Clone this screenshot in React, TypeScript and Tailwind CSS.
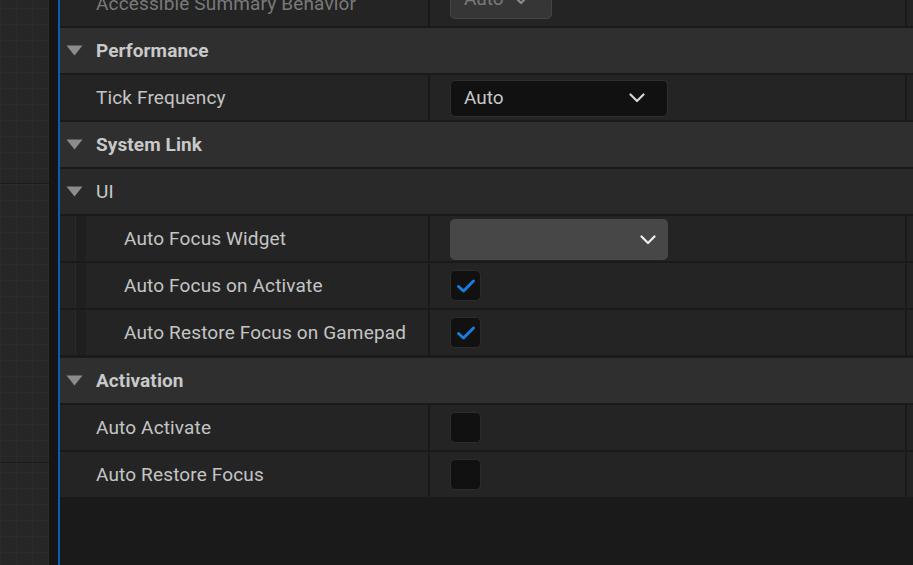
import { ReactNode } from "react";

const Triangle = () => (
  <svg width="17" height="11" viewBox="0 0 17 11" className="shrink-0">
    <path d="M0.5 0.5 H16.5 L8.5 10.5 Z" fill="#8c8c8c" />
  </svg>
);

const Chevron = ({ color = "#d6d6d6" }: { color?: string }) => (
  <svg width="16" height="10" viewBox="0 0 16 10">
    <path d="M1.5 1.5 L8 8 L14.5 1.5" fill="none" stroke={color} strokeWidth="2.2" strokeLinecap="round" strokeLinejoin="round" />
  </svg>
);

const Checkbox = ({ checked }: { checked?: boolean }) => (
  <div className="flex h-[31px] w-[31px] items-center justify-center rounded-[5px] border border-[#2c2c2c] bg-[#111111]">
    {checked && (
      <svg width="20" height="16" viewBox="0 0 20 16">
        <path d="M2.5 8.5 L7.5 13 L17.5 3" fill="none" stroke="#1a7ce0" strokeWidth="3" strokeLinecap="round" strokeLinejoin="round" />
      </svg>
    )}
  </div>
);

function Category({ title, bold = true, className = "" }: { title: string; bold?: boolean; className?: string }) {
  return (
    <div className={`flex h-[45px] shrink-0 items-center ${bold ? "bg-[#2f2f2f]" : "bg-[#292929]"} ${className}`}>
      <div className="pl-[6px] pr-[13px]">
        <Triangle />
      </div>
      <span className={`pt-[1px] text-[19px] tracking-[0.1px] text-[#c9c9c9] ${bold ? "font-bold" : ""}`}>{title}</span>
    </div>
  );
}

function Row({ label, indent, children, dim }: { label: string; indent?: boolean; children?: ReactNode; dim?: boolean }) {
  return (
    <div className="flex h-[45px] shrink-0 bg-[#242424]">
      {indent && (
        <div className="flex h-full w-[26px] shrink-0">
          <div className="w-[15px] bg-[#232323]" />
          <div className="w-[1px] bg-[#2a2a2a]" />
          <div className="w-[10px] bg-[#1f1f1f]" />
        </div>
      )}
      <div className={`flex items-center ${indent ? "w-[342px] pl-[38px]" : "w-[368px] pl-[36px]"}`}>
        <span className={`whitespace-nowrap pt-[2px] text-[19px] tracking-[0.15px] ${dim ? "text-[#7a7a7a]" : "text-[#c4c4c4]"}`}>{label}</span>
      </div>
      <div className="w-[2px] bg-[#1a1a1a]" />
      <div className="flex w-[475px] items-center pl-[20px]">{children}</div>
      <div className="w-[2px] bg-[#1a1a1a]" />
      <div className="flex-1" />
    </div>
  );
}

export default function App() {
  return (
    <div className="flex h-[565px] w-[913px] overflow-hidden bg-[#1a1a1a] font-['Roboto',sans-serif]">
      <div className="relative h-full w-[49px] shrink-0 bg-[#262626] bg-[linear-gradient(to_right,#2b2b2b_1px,transparent_1px),linear-gradient(to_bottom,#2b2b2b_1px,transparent_1px)] bg-[size:16px_16px] bg-[position:0px_8px]">
        <div className="absolute left-0 right-0 top-[183px] h-[1px] bg-[#1b1b1b]" />
        <div className="absolute left-0 right-0 top-[462px] h-[1px] bg-[#1b1b1b]" />
      </div>
      <div className="h-full w-[9px] shrink-0 bg-[#141414]" />
      <div className="h-full w-[2px] shrink-0 bg-[#0b5cb5]" />
      <div className="-mt-[19px] flex flex-1 flex-col gap-[2px]">
        <Row label="Accessible Summary Behavior" dim>
          <div className="-mt-[8px] flex h-[38px] w-[102px] items-center justify-between rounded-[5px] border border-[#454545] bg-[#363636] pl-[13px] pr-[22px]">
            <span className="text-[19px] text-[#7a7a7a]">Auto</span>
            <Chevron color="#8a8a8a" />
          </div>
        </Row>
        <Category title="Performance" />
        <Row label="Tick Frequency">
          <div className="mt-[1px] flex h-[37px] w-[218px] items-center justify-between rounded-[5px] border border-[#2e2e2e] bg-[#111111] pl-[13px] pr-[22px]">
            <span className="pt-[1px] text-[19px] text-[#c8c8c8]">Auto</span>
            <Chevron />
          </div>
        </Row>
        <Category title="System Link" />
        <Category title="UI" bold={false} />
        <Row label="Auto Focus Widget" indent>
          <div className="mt-[2px] flex h-[41px] w-[218px] items-center justify-end rounded-[5px] bg-[#474747] pr-[12px]">
            <Chevron color="#f0f0f0" />
          </div>
        </Row>
        <Row label="Auto Focus on Activate" indent>
          <Checkbox checked />
        </Row>
        <Row label="Auto Restore Focus on Gamepad" indent>
          <Checkbox checked />
        </Row>
        <Category title="Activation" className="mt-[1px]" />
        <Row label="Auto Activate">
          <Checkbox />
        </Row>
        <Row label="Auto Restore Focus">
          <Checkbox />
        </Row>
      </div>
    </div>
  );
}
